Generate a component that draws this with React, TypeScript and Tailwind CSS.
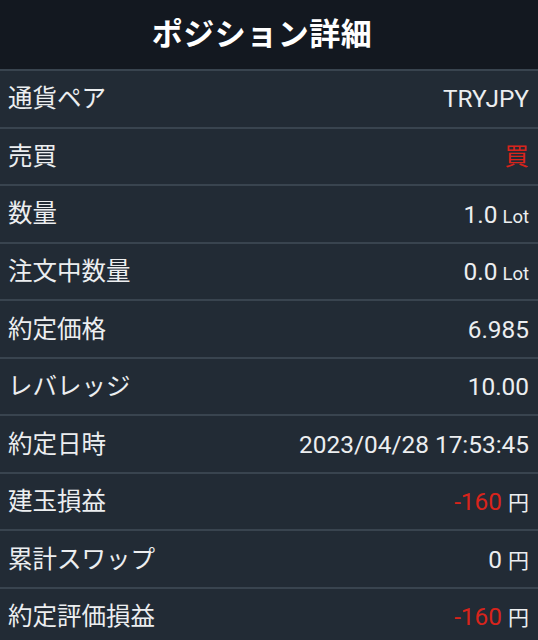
import React from "react"

type Row = {
  label: string
  value: string
  unit?: string
  red?: boolean
}

const rows: Row[] = [
  { label: "通貨ペア", value: "TRYJPY" },
  { label: "売買", value: "買", red: true },
  { label: "数量", value: "1.0", unit: "Lot" },
  { label: "注文中数量", value: "0.0", unit: "Lot" },
  { label: "約定価格", value: "6.985" },
  { label: "レバレッジ", value: "10.00" },
  { label: "約定日時", value: "2023/04/28 17:53:45" },
  { label: "建玉損益", value: "-160", unit: "円", red: true },
  { label: "累計スワップ", value: "0", unit: "円" },
  { label: "約定評価損益", value: "-160", unit: "円", red: true },
]

export default function App() {
  return (
    <div
      className="w-[538px] h-[640px] overflow-hidden bg-[#222b35]"
      style={{ fontFamily: "Roboto, 'Noto Sans CJK JP', sans-serif" }}
    >
      <div className="h-[69px] bg-[#131820] flex items-center justify-center pr-[14px] pt-[2px]">
        <h1 className="text-[31px] font-semibold text-white tracking-[0.5px]">ポジション詳細</h1>
      </div>
      {rows.map((r) => (
        <div
          key={r.label}
          className="h-[57.56px] border-t-2 border-[#39444f] flex items-center justify-between pl-2 pr-[9px] pt-[2px]"
        >
          <span className="text-[24.5px] text-[#eceef0]">{r.label}</span>
          <span className="flex items-baseline">
            <span className={"text-[24.4px] " + (r.red ? "text-[#d8241c]" : "text-[#eceef0]")}>
              {r.value}
            </span>
            {r.unit && (
              <span
                className={
                  "text-[#eceef0] " + (r.unit === "Lot" ? "ml-[5px] text-[18.5px]" : "ml-[6px] text-[21px]")
                }
              >
                {r.unit}
              </span>
            )}
          </span>
        </div>
      ))}
    </div>
  )
}
